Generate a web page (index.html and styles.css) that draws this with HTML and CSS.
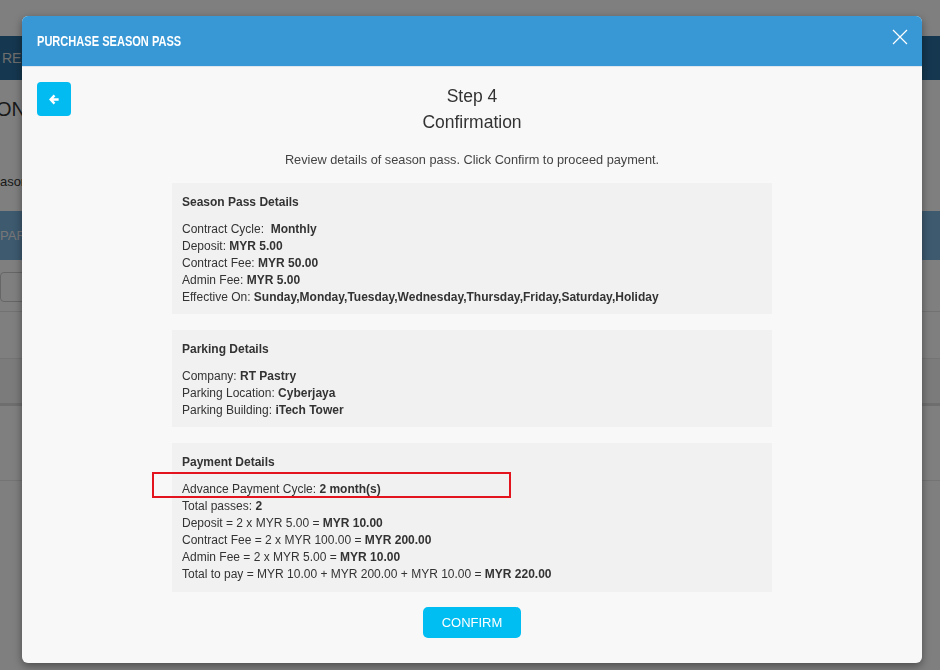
FILE: index.html
```html
<!DOCTYPE html>
<html lang="en">
<head>
    <meta charset="UTF-8">
    <title>Purchase Season Pass</title>
    <link rel="stylesheet" href="styles.css">
</head>
<body>
    <div class="page">
        <div class="page-bar">REPORTS</div>
        <div class="page-title">ONLINE SEASON PASS</div>
        <div class="page-note">Season pass list</div>
        <div class="page-table-head">PARKING</div>
        <div class="page-filter">
            <div class="page-input"></div>
        </div>
        <div class="page-row"></div>
        <div class="page-row page-row-alt"></div>
        <div class="page-foot"></div>
    </div>

    <div class="overlay"></div>

    <div class="modal">
        <div class="modal-header">
            <span class="modal-title">PURCHASE SEASON PASS</span>
            <span class="modal-close">
                <svg viewBox="0 0 16 16" width="16" height="16">
                    <path d="M1 1 L15 15 M15 1 L1 15" stroke="#fff" stroke-width="1.2" fill="none"/>
                </svg>
            </span>
        </div>

        <div class="modal-body">
            <button class="back-btn">
                <svg viewBox="0 0 12 12" width="11" height="11">
                    <path d="M6 1.5 L1.8 6 L6 10.5 M2 6 L10.5 6" stroke="#fff" stroke-width="2.6" fill="none"/>
                </svg>
            </button>

            <div class="step">Step 4</div>
            <div class="step-name">Confirmation</div>
            <p class="intro">Review details of season pass. Click Confirm to proceed payment.</p>

            <div class="detail-box">
                <h4>Season Pass Details</h4>
                <div>Contract Cycle: &nbsp;<b>Monthly</b></div>
                <div>Deposit: <b>MYR 5.00</b></div>
                <div>Contract Fee: <b>MYR 50.00</b></div>
                <div>Admin Fee: <b>MYR 5.00</b></div>
                <div>Effective On: <b>Sunday,Monday,Tuesday,Wednesday,Thursday,Friday,Saturday,Holiday</b></div>
            </div>

            <div class="detail-box">
                <h4>Parking Details</h4>
                <div>Company: <b>RT Pastry</b></div>
                <div>Parking Location: <b>Cyberjaya</b></div>
                <div>Parking Building: <b>iTech Tower</b></div>
            </div>

            <div class="detail-box detail-box-last">
                <h4>Payment Details</h4>
                <div class="highlight">Advance Payment Cycle: <b>2 month(s)</b></div>
                <div>Total passes: <b>2</b></div>
                <div>Deposit = 2 x MYR 5.00 = <b>MYR 10.00</b></div>
                <div>Contract Fee = 2 x MYR 100.00 = <b>MYR 200.00</b></div>
                <div>Admin Fee = 2 x MYR 5.00 = <b>MYR 10.00</b></div>
                <div>Total to pay = MYR 10.00 + MYR 200.00 + MYR 10.00 = <b>MYR 220.00</b></div>
            </div>

            <div class="actions">
                <button class="confirm-btn">CONFIRM</button>
            </div>
        </div>
    </div>
</body>
</html>
```

FILE: styles.css
```css
* {
    margin: 0;
    padding: 0;
    box-sizing: border-box;
}

body {
    width: 940px;
    height: 670px;
    overflow: hidden;
    background: #fff;
    font-family: "Liberation Sans", Arial, sans-serif;
    color: #333;
}

/* page behind the dialog */
.page {
    padding-top: 36px;
}

.page-bar {
    height: 44px;
    background: #2a6f9e;
    color: #ddd;
    font-size: 14px;
    line-height: 44px;
    padding-left: 2px;
    white-space: nowrap;
    overflow: hidden;
}

.page-title {
    font-size: 20px;
    padding-top: 18px;
    height: 58px;
    margin-left: -4px;
    white-space: nowrap;
    overflow: hidden;
}

.page-note {
    font-size: 13px;
    height: 73px;
    padding-top: 36px;
    margin-left: -16px;
    white-space: nowrap;
    overflow: hidden;
}

.page-table-head {
    height: 49px;
    background: #7bb4df;
    color: #eee;
    font-size: 13px;
    line-height: 49px;
    white-space: nowrap;
    overflow: hidden;
}

.page-filter {
    height: 52px;
    padding-top: 12px;
    border-bottom: 1px solid #e4e4e4;
}

.page-input {
    width: 60px;
    height: 30px;
    border: 1px solid #ccc;
    border-radius: 4px;
}

.page-row {
    height: 47px;
    border-bottom: 1px solid #e8e8e8;
}

.page-row-alt {
    background: #f6f6f6;
    border-bottom: 3px solid #ddd;
}

.page-foot {
    height: 75px;
    border-bottom: 1px solid #e8e8e8;
}

.overlay {
    position: fixed;
    inset: 0;
    background: rgba(0, 0, 0, 0.5);
}

/* dialog */
.modal {
    position: absolute;
    left: 22px;
    top: 16px;
    width: 900px;
    height: 647px;
    background: #f8f8f8;
    border-radius: 6px;
    overflow: hidden;
    box-shadow: 0 3px 9px rgba(0, 0, 0, 0.4);
}

.modal-header {
    height: 51px;
    background: #3898d5;
    border-bottom: 1px solid #dfe6ec;
    display: flex;
    align-items: center;
    justify-content: space-between;
    padding: 0 14px 0 15px;
}

.modal-title {
    color: #fff;
    font-size: 14px;
    font-weight: bold;
    display: inline-block;
    transform: scaleX(0.79);
    transform-origin: left center;
}

.modal-close {
    display: flex;
    margin-top: -8px;
}

.modal-body {
    position: relative;
    padding: 16px 15px 0;
    text-align: center;
}

.back-btn {
    position: absolute;
    left: 15px;
    top: 15px;
    width: 34px;
    height: 34px;
    border: none;
    border-radius: 4px;
    background: #01bbf1;
    display: flex;
    align-items: center;
    justify-content: center;
}

.step {
    font-size: 17.5px;
    line-height: 24px;
    margin-top: 1px;
}

.step-name {
    font-size: 17.5px;
    line-height: 24px;
    margin-top: 2px;
}

.intro {
    font-size: 12.75px;
    color: #444;
    margin: 18px 0 16px;
}

.detail-box {
    width: 600px;
    margin: 0 auto 16px;
    padding: 11px 10px 8px;
    background: #f1f1f1;
    text-align: left;
    font-size: 12px;
    line-height: 17px;
    color: #333;
}

.detail-box-last {
    padding-bottom: 9px;
}

.detail-box h4 {
    font-size: 12px;
    margin-bottom: 10px;
}

.highlight {
    position: relative;
}

.highlight::after {
    content: "";
    position: absolute;
    left: -30px;
    top: -9px;
    width: 359px;
    height: 26px;
    box-sizing: border-box;
    border: 2px solid #e3141d;
}

.actions {
    margin-top: -1px;
}

.confirm-btn {
    width: 98px;
    height: 31px;
    border: none;
    border-radius: 5px;
    background: #00bdf2;
    color: #fff;
    font-family: "Liberation Sans", Arial, sans-serif;
    font-size: 13px;
}
```
